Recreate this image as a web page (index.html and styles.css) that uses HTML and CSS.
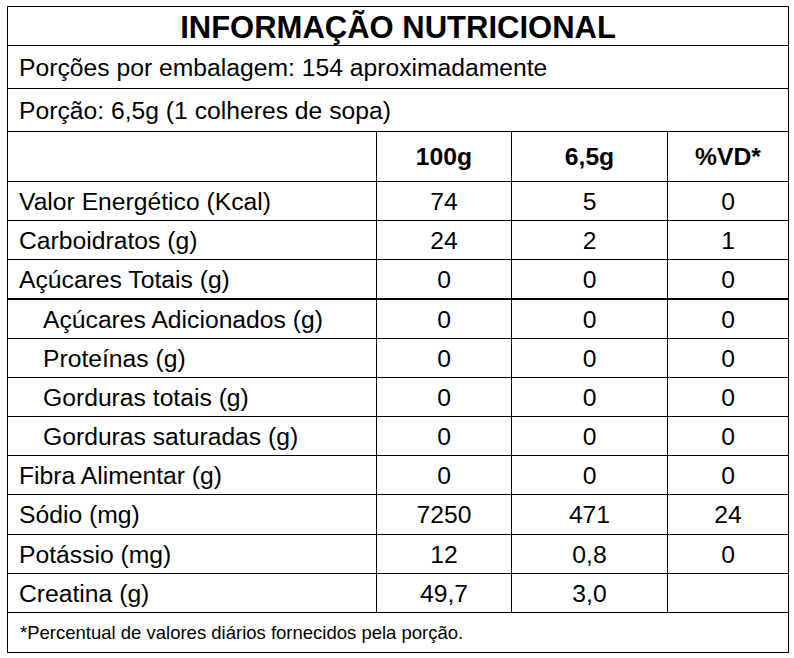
FILE: index.html
```html
<!DOCTYPE html>
<html lang="pt-BR">
<head>
<meta charset="utf-8">
<title>Informação Nutricional</title>
<link rel="stylesheet" href="styles.css">
</head>
<body>
<div class="wrap">
  <div class="table">
    <div class="cell full title">INFORMAÇÃO NUTRICIONAL</div>
    <div class="cell full info">Porções por embalagem: 154 aproximadamente</div>
    <div class="cell full info">Porção: 6,5g (1 colheres de sopa)</div>

    <div class="cell head label"></div>
    <div class="cell head num">100g</div>
    <div class="cell head num">6,5g</div>
    <div class="cell head num last">%VD*</div>

    <div class="cell r39 label">Valor Energético (Kcal)</div>
    <div class="cell r39 num">74</div>
    <div class="cell r39 num">5</div>
    <div class="cell r39 num last">0</div>

    <div class="cell r39 label">Carboidratos (g)</div>
    <div class="cell r39 num">24</div>
    <div class="cell r39 num">2</div>
    <div class="cell r39 num last">1</div>

    <div class="cell thick label">Açúcares Totais (g)</div>
    <div class="cell thick num">0</div>
    <div class="cell thick num">0</div>
    <div class="cell thick num last">0</div>

    <div class="cell r39 label sub">Açúcares Adicionados (g)</div>
    <div class="cell r39 num">0</div>
    <div class="cell r39 num">0</div>
    <div class="cell r39 num last">0</div>

    <div class="cell r39 label sub">Proteínas (g)</div>
    <div class="cell r39 num">0</div>
    <div class="cell r39 num">0</div>
    <div class="cell r39 num last">0</div>

    <div class="cell r39 label sub">Gorduras totais (g)</div>
    <div class="cell r39 num">0</div>
    <div class="cell r39 num">0</div>
    <div class="cell r39 num last">0</div>

    <div class="cell r39 label sub">Gorduras saturadas (g)</div>
    <div class="cell r39 num">0</div>
    <div class="cell r39 num">0</div>
    <div class="cell r39 num last">0</div>

    <div class="cell r39 label">Fibra Alimentar (g)</div>
    <div class="cell r39 num">0</div>
    <div class="cell r39 num">0</div>
    <div class="cell r39 num last">0</div>

    <div class="cell r40 label">Sódio (mg)</div>
    <div class="cell r40 num">7250</div>
    <div class="cell r40 num">471</div>
    <div class="cell r40 num last">24</div>

    <div class="cell r39 label">Potássio (mg)</div>
    <div class="cell r39 num">12</div>
    <div class="cell r39 num">0,8</div>
    <div class="cell r39 num last">0</div>

    <div class="cell r39 label">Creatina (g)</div>
    <div class="cell r39 num">49,7</div>
    <div class="cell r39 num">3,0</div>
    <div class="cell r39 num last"></div>

    <div class="cell full foot">*Percentual de valores diários fornecidos pela porção.</div>
  </div>
</div>
</body>
</html>
```
FILE: styles.css
```css
html, body {
  margin: 0;
  padding: 0;
  background: #ffffff;
}

body {
  font-family: "Liberation Sans", Arial, sans-serif;
  color: #000000;
}

.wrap {
  padding: 6px 0 0 7px;
}

.table {
  display: grid;
  grid-template-columns: 369px 135px 156px 120px;
  width: 782px;
  box-sizing: border-box;
  border: 1px solid #000;
  border-bottom: none;
}

.cell {
  box-sizing: border-box;
  border-bottom: 1px solid #000;
  border-right: 1px solid #000;
  display: flex;
  align-items: center;
  font-size: 24.7px;
  line-height: 1;
  white-space: nowrap;
}

.cell.last {
  border-right: none;
}

.full {
  grid-column: 1 / -1;
  border-right: none;
}

.title {
  height: 39px;
  justify-content: center;
  font-weight: bold;
  font-size: 31px;
  padding-top: 2px;
}

.info {
  height: 43px;
  padding-left: 11px;
  padding-top: 2px;
}

.head {
  height: 50px;
  font-weight: bold;
}

.r39 {
  height: 39px;
}

.r40 {
  height: 40px;
}

.thick {
  height: 40px;
  border-bottom-width: 2px;
}

.label {
  padding-left: 11px;
  padding-top: 2px;
}

.label.sub {
  padding-left: 35px;
}

.num {
  justify-content: center;
  padding-top: 2px;
}

.foot {
  height: 40px;
  font-size: 18.5px;
  padding-left: 12px;
  padding-top: 2px;
}
```
